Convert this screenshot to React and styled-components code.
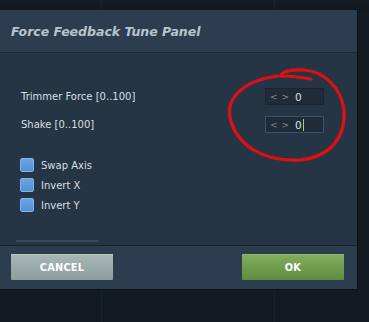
import React from "react";
import styled, { createGlobalStyle } from "styled-components";

const Global = createGlobalStyle`
  html, body { margin: 0; padding: 0; background: #141a21; }
  body { font-family: "DejaVu Sans", Verdana, sans-serif; }
`;

const Page = styled.div`
  position: relative;
  width: 369px;
  height: 322px;
  overflow: hidden;
  background:
    linear-gradient(90deg, transparent 101px, #19212a 101px, #19212a 102px, transparent 102px, transparent 274px, #19212a 274px, #19212a 275px, transparent 275px),
    linear-gradient(180deg, #161d25 0, #121820 10px, #141a21 10px);
  padding-top: 10px;
  box-sizing: border-box;
`;

const Panel = styled.div`
  width: 357px;
  border-right: 1px solid #0c1116;
  border-bottom: 1px solid #0c1116;
  display: flex;
  flex-direction: column;
`;

const Header = styled.div`
  height: 42px;
  background: #2c3d4f;
  border-bottom: 1px solid #1d2834;
  display: flex;
  align-items: center;
  padding-left: 11px;
`;

const Title = styled.h1`
  margin: 0;
  font-family: "DejaVu Sans", sans-serif;
  font-weight: bold;
  font-style: italic;
  font-size: 12.5px;
  color: #b8c5ce;
`;

const Body = styled.div`
  height: 192px;
  background: #263545;
  padding: 35px 0 0 0;
  box-sizing: border-box;
  display: flex;
  flex-direction: column;
`;

const FieldRow = styled.div`
  display: flex;
  align-items: center;
  justify-content: space-between;
  padding: 0 33px 0 21px;
  height: 17px;
  margin-bottom: 11px;
`;

const Label = styled.span`
  font-size: 10px;
  color: #d8dfe4;
`;

const Spin = styled.div`
  width: 59px;
  height: 17px;
  box-sizing: border-box;
  background: #1f2b38;
  border: 1px solid ${(p) => (p.$focused ? "#3d5266" : "#1a2430")};
  display: flex;
  align-items: center;
  padding-left: 4px;
  gap: 4px;
  font-size: 10.5px;
`;

const Arrow = styled.span`
  color: #808c98;
  font-size: 9px;
  font-family: "DejaVu Sans", sans-serif;
`;

const Value = styled.span`
  color: #d9e0e5;
  margin-left: 2px;
  border-right: ${(p) => (p.$caret ? "1px solid #9fd07a" : "none")};
  padding-right: 1px;
`;

const Checks = styled.div`
  display: flex;
  flex-direction: column;
  gap: 6px;
  padding-left: 20px;
  margin-top: 14px;
`;

const CheckRow = styled.label`
  display: flex;
  align-items: center;
  gap: 7px;
  font-size: 10px;
  color: #d8dfe4;
  height: 14px;
`;

const Box = styled.span`
  width: 14px;
  height: 14px;
  box-sizing: border-box;
  border-radius: 2px;
  background: linear-gradient(180deg, #6aa4e4, #5690d2);
  border: 1px solid #7fb3ea;
`;

const ScrollLine = styled.div`
  margin-top: auto;
  margin-left: 16px;
  margin-bottom: 3px;
  width: 83px;
  height: 2px;
  background: #3a4a5b;
`;

const Footer = styled.div`
  height: 44px;
  background: #2c3d4f;
  border-top: 1px solid #18212b;
  display: flex;
  justify-content: space-between;
  padding: 8px 13px 0 11px;
  box-sizing: border-box;
`;

const Button = styled.button`
  width: 102px;
  height: 26px;
  border: none;
  border-radius: 1px;
  font-family: "DejaVu Sans", sans-serif;
  font-weight: bold;
  font-size: 9.8px;
  color: #ffffff;
  letter-spacing: 0.2px;
  background: ${(p) =>
    p.$primary
      ? "linear-gradient(180deg, #84ae60, #5e8c3c)"
      : "linear-gradient(180deg, #a9b8b7, #8b9d9b)"};
  box-shadow: inset 0 1px 0 ${(p) => (p.$primary ? "#93bb70" : "#bcc8c8")};
`;

const Annotation = styled.svg`
  position: absolute;
  left: 0;
  top: 0;
  pointer-events: none;
`;

export default function App() {
  return (
    <Page>
      <Global />
      <Panel>
        <Header>
          <Title>Force Feedback Tune Panel</Title>
        </Header>
        <Body>
          <FieldRow>
            <Label>Trimmer Force [0..100]</Label>
            <Spin>
              <Arrow>&lt;</Arrow>
              <Arrow>&gt;</Arrow>
              <Value>0</Value>
            </Spin>
          </FieldRow>
          <FieldRow>
            <Label>Shake [0..100]</Label>
            <Spin $focused>
              <Arrow>&lt;</Arrow>
              <Arrow>&gt;</Arrow>
              <Value $caret>0</Value>
            </Spin>
          </FieldRow>
          <Checks>
            <CheckRow><Box />Swap Axis</CheckRow>
            <CheckRow><Box />Invert X</CheckRow>
            <CheckRow><Box />Invert Y</CheckRow>
          </Checks>
          <ScrollLine />
        </Body>
        <Footer>
          <Button>CANCEL</Button>
          <Button $primary>OK</Button>
        </Footer>
      </Panel>
      <Annotation width="369" height="322" viewBox="0 0 369 322">
        <path
          d="M311 79 C300 77, 288 76, 281 76 C281 72, 290 69, 305 70 C325 72, 341 88, 344 110 C346 136, 331 157, 300 160 C264 162, 237 146, 230 118 C226 97, 245 80, 278 76"
          fill="none"
          stroke="#e01010"
          strokeWidth="3.2"
          strokeLinecap="round"
          strokeLinejoin="round"
        />
      </Annotation>
    </Page>
  );
}
